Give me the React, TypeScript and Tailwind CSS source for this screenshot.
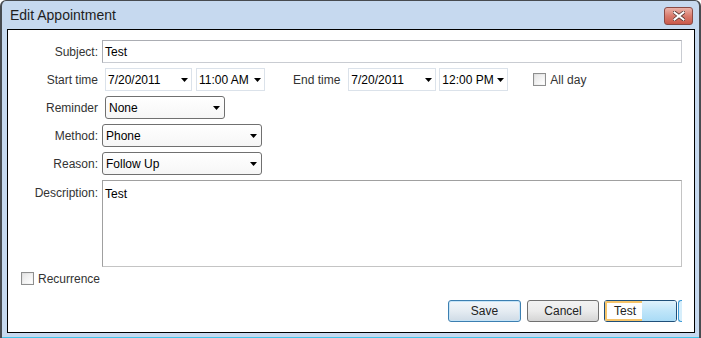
import React from "react";

const Arrow = () => (
  <svg width="7" height="4" viewBox="0 0 7 4" className="shrink-0">
    <path d="M0 0H7L3.5 4Z" fill="#000" />
  </svg>
);

const Check = ({ label }: { label: string }) => (
  <div className="flex items-center gap-[4px] h-[13px]">
    <div className="w-[13px] h-[13px] border border-[#8e8f8f] bg-gradient-to-br from-[#dcdcdc] to-[#fbfbfb] p-[1px]">
      <div className="w-full h-full bg-gradient-to-br from-[#e6e6e6] to-white" />
    </div>
    <span className="text-[#333]">{label}</span>
  </div>
);

const DateBox = ({ value, w }: { value: string; w: string }) => (
  <div className={`${w} h-[23px] border border-[#dbe2ea] flex items-center justify-between pl-[2px] pr-[3px]`}>
    <span>{value}</span>
    <Arrow />
  </div>
);

const Combo = ({ value, w }: { value: string; w: string }) => (
  <div className={`${w} h-[23px] border border-[#707070] rounded-[3px] bg-gradient-to-b from-white to-[#f6f6f6] flex items-center justify-between pl-[3px] pr-[4px]`}>
    <span>{value}</span>
    <Arrow />
  </div>
);

const Label = ({ text, top }: { text: string; top?: boolean }) => (
  <div className={`w-[90px] shrink-0 text-right text-[#333] ${top ? "pt-[4px]" : ""}`}>{text}</div>
);

export default function App() {
  return (
    <div className="w-[701px] h-[338px] flex flex-col bg-[#c6d9ef] border-x-2 border-t border-[#474b50] rounded-t-[6px] font-['Liberation_Sans',Arial,sans-serif] text-[12px] text-black overflow-hidden">
      <div className="h-[28px] shrink-0 flex items-start justify-between pl-[8px] pr-[6px]">
        <span className="text-[14px] text-[#1e1e1e] leading-none pt-[7px]">Edit Appointment</span>
        <div className="mt-[6px] w-[29px] h-[18px] rounded-[3px] border border-[#8a4a44] bg-gradient-to-b from-[#eab3aa] via-[#d97b6d] to-[#c9594a] flex items-center justify-center">
          <svg width="12" height="10" viewBox="0 0 12 10">
            <path d="M1.5 1.5L10.5 8.5M10.5 1.5L1.5 8.5" stroke="#5a3a36" strokeWidth="3.6" strokeLinecap="square" />
            <path d="M1.5 1.5L10.5 8.5M10.5 1.5L1.5 8.5" stroke="#fff" strokeWidth="2" strokeLinecap="square" />
          </svg>
        </div>
      </div>

      <div className="ml-[5px] mr-[4px] h-[304px] shrink-0 border border-black bg-white flex flex-col pt-[10px]">
        <div className="flex flex-col gap-[5px] pr-[12px]">
          <div className="flex items-center h-[23px]">
            <Label text="Subject:" />
            <div className="ml-[4px] flex-1 h-[23px] border border-[#abadb3] border-r-[#c9ccd2] border-b-[#c9ccd2] flex items-center pl-[2px]">Test</div>
          </div>

          <div className="flex items-center h-[23px]">
            <Label text="Start time" />
            <div className="ml-[7px]">
              <DateBox value="7/20/2011" w="w-[87px]" />
            </div>
            <div className="ml-[4px]">
              <DateBox value="11:00 AM" w="w-[69px]" />
            </div>
            <span className="ml-[28px] text-[#333]">End time</span>
            <div className="ml-[8px]">
              <DateBox value="7/20/2011" w="w-[88px]" />
            </div>
            <div className="ml-[3px]">
              <DateBox value="12:00 PM" w="w-[69px]" />
            </div>
            <div className="ml-[25px]">
              <Check label="All day" />
            </div>
          </div>

          <div className="flex items-center h-[23px]">
            <Label text="Reminder" />
            <div className="ml-[7px]">
              <Combo value="None" w="w-[120px]" />
            </div>
          </div>

          <div className="flex items-center h-[23px]">
            <Label text="Method:" />
            <div className="ml-[4px]">
              <Combo value="Phone" w="w-[160px]" />
            </div>
          </div>

          <div className="flex items-center h-[23px]">
            <Label text="Reason:" />
            <div className="ml-[4px]">
              <Combo value="Follow Up" w="w-[160px]" />
            </div>
          </div>

          <div className="flex items-start h-[87px]">
            <Label text="Description:" top />
            <div className="ml-[4px] flex-1 h-[87px] border border-[#a0a0a0] border-r-[#c4c4c4] border-b-[#c4c4c4] pl-[2px] pt-[4px]">Test</div>
          </div>
        </div>

        <div className="mt-[5px] pl-[13px]">
          <Check label="Recurrence" />
        </div>

        <div className="mt-[15px] flex justify-end items-center pr-[12px] h-[22px]">
          <button className="w-[73px] h-[22px] rounded-[3px] border border-[#3c7fb1] bg-gradient-to-b from-[#f2f6fa] via-[#e5ecf2] to-[#cfdbe6] shadow-[inset_0_0_0_1px_#c6e4f7] text-[#222]">
            Save
          </button>
          <button className="ml-[6px] w-[72px] h-[22px] rounded-[3px] border border-[#707070] bg-gradient-to-b from-[#f2f2f2] via-[#ebebeb] to-[#d5d5d5] text-[#222]">
            Cancel
          </button>
          <div className="ml-[5px] w-[73px] h-[22px] rounded-[3px] border border-[#1f4f79] flex overflow-hidden">
            <div className="w-[37px] h-full bg-white border-y-2 border-l-2 border-[#f5c46a] flex items-center pl-[7px] text-[#222]">
              Test
            </div>
            <div className="flex-1 h-full bg-gradient-to-b from-[#dff2fc] via-[#bfe5f9] to-[#a9dbf6]" />
          </div>
          <div className="ml-[1px] w-[4px] h-[22px] rounded-l-[3px] border-y border-l border-[#3c9ad6] bg-[#d6eefb]" />
        </div>
      </div>

      <div className="h-[4px] shrink-0" />
      <div className="h-[1px] shrink-0 bg-[#3fc4ea]" />
    </div>
  );
}
